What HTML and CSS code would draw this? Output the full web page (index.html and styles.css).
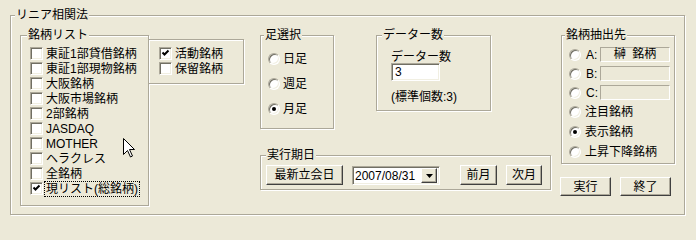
FILE: index.html
```html
<!DOCTYPE html>
<html lang="ja">
<head>
<meta charset="utf-8">
<title>リニア相関法</title>
<link rel="stylesheet" href="styles.css">
</head>
<body>
<div class="group dialog">
  <span class="group-title t-dialog">リニア相関法</span>

  <div class="group stock-list">
    <span class="group-title t-list">銘柄リスト</span>
    <div class="check-row"><span class="cb"></span><span class="lbl">東証1部貸借銘柄</span></div>
    <div class="check-row"><span class="cb"></span><span class="lbl">東証1部現物銘柄</span></div>
    <div class="check-row"><span class="cb"></span><span class="lbl">大阪銘柄</span></div>
    <div class="check-row"><span class="cb"></span><span class="lbl">大阪市場銘柄</span></div>
    <div class="check-row"><span class="cb"></span><span class="lbl">2部銘柄</span></div>
    <div class="check-row"><span class="cb"></span><span class="lbl">JASDAQ</span></div>
    <div class="check-row"><span class="cb"></span><span class="lbl">MOTHER</span></div>
    <div class="check-row"><span class="cb"></span><span class="lbl">ヘラクレス</span></div>
    <div class="check-row"><span class="cb"></span><span class="lbl">全銘柄</span></div>
    <div class="check-row"><span class="cb checked"><svg viewBox="0 0 9 9" width="9" height="9"><polyline points="1.5,3.5 3.5,5.5 7.5,1.5" fill="none" stroke="#000" stroke-width="2"/></svg></span><span class="lbl focus">現リスト(総銘柄)</span></div>
  </div>

  <div class="group flags">
    <div class="check-row"><span class="cb checked"><svg viewBox="0 0 9 9" width="9" height="9"><polyline points="1.5,3.5 3.5,5.5 7.5,1.5" fill="none" stroke="#000" stroke-width="2"/></svg></span><span class="lbl">活動銘柄</span></div>
    <div class="check-row"><span class="cb"></span><span class="lbl">保留銘柄</span></div>
  </div>

  <div class="middle">
    <div class="middle-top">
      <div class="group span-select">
        <span class="group-title t-span">足選択</span>
        <div class="radio-row"><span class="rb"></span><span class="rlbl">日足</span></div>
        <div class="radio-row"><span class="rb"></span><span class="rlbl">週足</span></div>
        <div class="radio-row"><span class="rb on"></span><span class="rlbl">月足</span></div>
      </div>
      <div class="group data-count">
        <span class="group-title t-count">データー数</span>
        <div class="dc-label">データー数</div>
        <div class="textbox">3</div>
        <div class="dc-note">(標準個数:3)</div>
      </div>
    </div>
    <div class="group exec-date">
      <span class="group-title t-date">実行期日</span>
      <div class="btn b-latest">最新立会日</div>
      <div class="combo"><span class="combo-text">2007/08/31</span><span class="combo-btn"><svg viewBox="0 0 7 4" width="7" height="4"><polygon points="0,0 7,0 3.5,4" fill="#000"/></svg></span></div>
      <div class="btn b-prev">前月</div>
      <div class="btn b-next">次月</div>
    </div>
  </div>

  <div class="right">
    <div class="group source">
      <span class="group-title t-source">銘柄抽出先</span>
      <div class="radio-row2"><span class="rb"></span><span class="slot">A:</span><span class="static-box">榊&nbsp;&nbsp;銘柄</span></div>
      <div class="radio-row2"><span class="rb"></span><span class="slot">B:</span><span class="static-box"></span></div>
      <div class="radio-row2"><span class="rb"></span><span class="slot">C:</span><span class="static-box"></span></div>
      <div class="radio-row2"><span class="rb"></span><span class="rlbl2">注目銘柄</span></div>
      <div class="radio-row2 gap1"><span class="rb on"></span><span class="rlbl2">表示銘柄</span></div>
      <div class="radio-row2 gap1"><span class="rb"></span><span class="rlbl2">上昇下降銘柄</span></div>
    </div>
    <div class="actions">
      <div class="btn b-act">実行</div>
      <div class="btn b-act">終了</div>
    </div>
  </div>
</div>

<svg class="cursor" width="13" height="20" viewBox="0 0 13 20"><path d="M0.5 0.5 L0.5 16.5 L4.5 12.5 L7.5 19 L9.5 18 L6.5 11.5 L11.5 11.5 Z" fill="#fff" stroke="#000" stroke-width="1" stroke-linejoin="miter"/></svg>
</body>
</html>
```

FILE: styles.css
```css
* { box-sizing: border-box; }

html, body {
  margin: 0;
  padding: 0;
  background: #ECE9D8;
}

html { overflow: hidden; }

body {
  position: relative;
  width: 696px;
  height: 226px;
  padding: 15px 0 0 10px;
  overflow: hidden;
  font-family: "Liberation Sans", "Noto Sans CJK JP", "Noto Sans CJK SC", sans-serif;
  font-size: 12px;
  line-height: 14px;
  color: #000;
}

/* etched group box */
.group {
  position: relative;
  border: 1px solid #ACA899;
  box-shadow: 1px 1px 0 #fff, inset 1px 1px 0 #fff;
}

.group-title {
  position: absolute;
  top: -8px;
  padding: 0 1px;
  background: #ECE9D8;
  line-height: 14px;
  white-space: nowrap;
}

.dialog {
  width: 675px;
  height: 200px;
  display: flex;
  align-items: flex-start;
}
.t-dialog { left: 4px; }

/* stock list */
.stock-list {
  margin: 19px 0 0 9px;
  width: 129px;
  height: 171px;
  padding: 10px 0 0 9px;
  flex: none;
}
.t-list { left: 6px; }

.check-row {
  height: 15px;
  display: flex;
  align-items: center;
}

.cb {
  width: 13px;
  height: 13px;
  flex: none;
  background: #fff;
  border: 1px solid;
  border-color: #ACA899 #fff #fff #ACA899;
  box-shadow: inset 1px 1px 0 #716F64, inset -1px -1px 0 #F1EFE2;
  display: flex;
  align-items: center;
  justify-content: center;
}
.cb svg { display: block; }

.lbl {
  margin-left: 2px;
  padding: 0 1px;
  white-space: nowrap;
}
.lbl.focus {
  outline: 1px dotted #000;
  outline-offset: 0;
}

/* flags box */
.flags {
  margin: 23px 0 0 -1px;
  width: 96px;
  height: 45px;
  padding: 6px 0 0 10px;
  flex: none;
}

/* middle column */
.middle {
  margin: 19px 0 0 16px;
  width: 291px;
  flex: none;
}
.middle-top {
  display: flex;
  align-items: flex-start;
}

.span-select {
  width: 74px;
  height: 94px;
  padding: 15px 0 0 7px;
  display: flex;
  flex-direction: column;
  gap: 9px;
}
.t-span { left: 3px; }

.radio-row {
  height: 16px;
  display: flex;
  align-items: center;
}

.rb {
  width: 12px;
  height: 12px;
  flex: none;
  border-radius: 50%;
  background: #fff;
  border: 1px solid;
  border-color: #ACA899 #fff #fff #ACA899;
  box-shadow: inset 1px 1px 0 #716F64, inset -1px -1px 0 #F1EFE2;
  display: flex;
  align-items: center;
  justify-content: center;
}
.rb.on::after {
  content: "";
  width: 4px;
  height: 4px;
  border-radius: 50%;
  background: #000;
}

.rlbl {
  margin-left: 3px;
  white-space: nowrap;
}

.data-count {
  margin-left: 42px;
  width: 115px;
  height: 76px;
  padding: 14px 0 0 14px;
}
.t-count { left: 5px; }

.dc-label { white-space: nowrap; }

.textbox {
  margin-top: -1px;
  width: 49px;
  height: 18px;
  background: #fff;
  border: 1px solid;
  border-color: #ACA899 #fff #fff #ACA899;
  box-shadow: inset 1px 1px 0 #716F64, inset -1px -1px 0 #F1EFE2;
  padding: 1px 0 0 3px;
  line-height: 14px;
}

.dc-note {
  margin-top: 9px;
  white-space: nowrap;
}

.exec-date {
  margin-top: 26px;
  width: 291px;
  height: 35px;
  padding: 9px 0 0 5px;
  display: flex;
  align-items: flex-start;
}
.t-date { left: 5px; }

.btn {
  height: 20px;
  flex: none;
  display: flex;
  align-items: center;
  justify-content: center;
  background: #ECE9D8;
  border: 1px solid;
  border-color: #fff #404040 #404040 #fff;
  box-shadow: inset -1px -1px 0 #ACA899;
  white-space: nowrap;
}
.b-latest { width: 77px; }
.b-prev { width: 37px; margin-left: 20px; }
.b-next { width: 36px; margin-left: 9px; }

.combo {
  margin: 1px 0 0 9px;
  width: 88px;
  height: 19px;
  flex: none;
  background: #fff;
  border: 1px solid;
  border-color: #ACA899 #fff #fff #ACA899;
  box-shadow: inset 1px 1px 0 #716F64, inset -1px -1px 0 #F1EFE2;
  display: flex;
  align-items: center;
  padding: 0 2px 0 2px;
}
.combo-text {
  flex: 1;
  white-space: nowrap;
}
.combo-btn {
  width: 16px;
  height: 15px;
  flex: none;
  background: #ECE9D8;
  border: 1px solid;
  border-color: #fff #404040 #404040 #fff;
  box-shadow: inset -1px -1px 0 #ACA899;
  display: flex;
  align-items: center;
  justify-content: center;
}
.combo-btn svg { display: block; }

/* right column */
.right {
  margin: 19px 0 0 10px;
  width: 114px;
  flex: none;
}

.source {
  width: 114px;
  height: 129px;
  padding: 9px 0 0 7px;
}
.t-source { left: 3px; }

.radio-row2 {
  height: 19px;
  display: flex;
  align-items: center;
}
.radio-row2.gap1 { margin-top: 1px; }

.slot {
  margin-left: 5px;
  width: 14px;
  flex: none;
}
.rlbl2 {
  margin-left: 4px;
  white-space: nowrap;
}

.static-box {
  width: 70px;
  height: 15px;
  flex: none;
  border: 1px solid;
  border-color: #ACA899 #fff #fff #ACA899;
  text-align: center;
  line-height: 13px;
  white-space: nowrap;
}

.actions {
  margin: 13px 0 0 -1px;
  display: flex;
  gap: 9px;
}
.b-act {
  width: 51px;
  height: 19px;
}

.cursor {
  position: absolute;
  left: 123px;
  top: 138px;
}
```
